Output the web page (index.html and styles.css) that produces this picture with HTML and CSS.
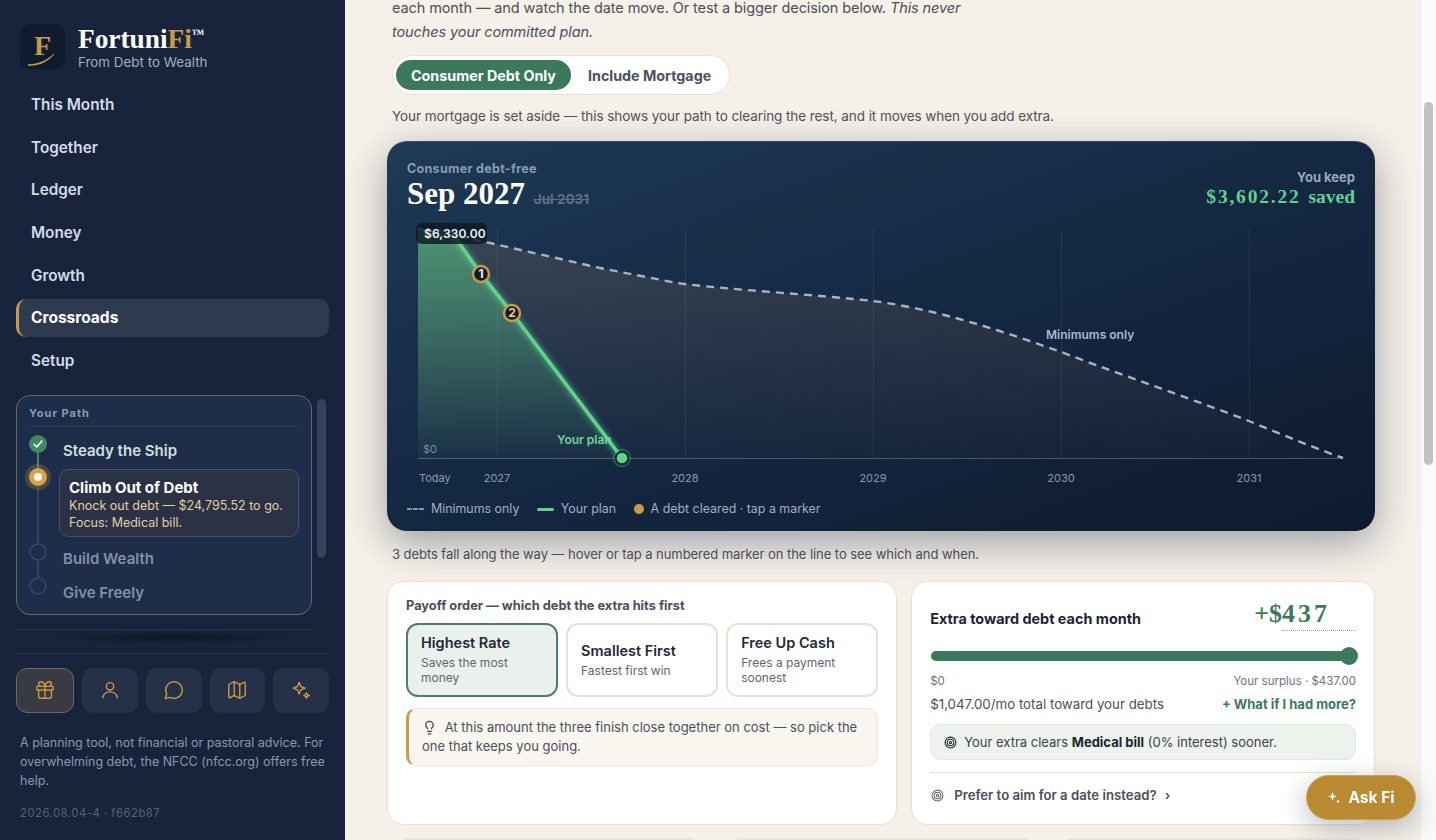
FILE: index.html
```html
<!DOCTYPE html>
<html lang="en">
<head>
  <meta charset="UTF-8" />
  <title>FortuniFi - Crossroads</title>
  <link rel="stylesheet" href="styles.css">
</head>
<body>
  <div class="app">
    <aside class="sidebar">
      <div class="brand">
        <div class="brand-logo">
          <span class="brand-f">F</span>
          <svg class="brand-swoosh" viewBox="0 0 45 45" width="45" height="45"><path d="M8 41 C18 40.500 27 37 34 30 C28 37.500 18 42 8 41Z" fill="#c99b45" stroke="#c99b45" stroke-width="1"/></svg>
        </div>
        <div class="brand-text">
          <div class="brand-name">Fortuni<span class="gold">Fi</span><sup>™</sup></div>
          <div class="brand-sub">From Debt to Wealth</div>
        </div>
      </div>

      <nav class="nav">
        <a class="nav-item">This Month</a>
        <a class="nav-item">Together</a>
        <a class="nav-item">Ledger</a>
        <a class="nav-item">Money</a>
        <a class="nav-item">Growth</a>
        <a class="nav-item active">Crossroads</a>
        <a class="nav-item">Setup</a>
      </nav>

      <div class="path-wrap">
        <div class="path-panel">
          <div class="path-title">Your Path</div>
          <div class="step done">
            <span class="step-node">
              <svg viewBox="0 0 18 18" width="18" height="18"><path d="M5.200 9.400l2.600 2.600 5-6" fill="none" stroke="#fff" stroke-width="1.600" stroke-linecap="round" stroke-linejoin="round"/></svg>
            </span>
            <span class="step-label">Steady the Ship</span>
          </div>
          <div class="step current">
            <span class="step-node"></span>
            <div class="step-card">
              <div class="step-card-title">Climb Out of Debt</div>
              <div class="step-card-desc">Knock out debt — $24,795.52 to go.<br>Focus: Medical bill.</div>
            </div>
          </div>
          <div class="step">
            <span class="step-node"></span>
            <span class="step-label">Build Wealth</span>
          </div>
          <div class="step last">
            <span class="step-node"></span>
            <span class="step-label">Give Freely</span>
          </div>
        </div>
        <div class="path-scroll"></div>
      </div>

      <div class="side-sep"></div>
      <div class="side-fade"></div>

      <div class="tools">
        <button class="tool active">
          <svg viewBox="0 0 24 24"><rect x="3" y="8" width="18" height="4" rx="1"/><path d="M12 8v13"/><path d="M19 12v7a2 2 0 0 1-2 2H7a2 2 0 0 1-2-2v-7"/><path d="M7.500 8a2.500 2.500 0 0 1 0-5A4.800 8 0 0 1 12 8a4.800 8 0 0 1 4.500-5 2.500 2.500 0 0 1 0 5"/></svg>
        </button>
        <button class="tool">
          <svg viewBox="0 0 24 24"><circle cx="12" cy="8" r="4"/><path d="M4 20.500c.8-4 4-6.500 8-6.500s7.200 2.500 8 6.500"/></svg>
        </button>
        <button class="tool">
          <svg viewBox="0 0 24 24"><path d="M7.900 20A9 9 0 1 0 4 16.100L2.500 21.500Z"/></svg>
        </button>
        <button class="tool">
          <svg viewBox="0 0 24 24"><path d="M14.106 5.553a2 2 0 0 0 1.788 0l3.659-1.830A1 1 0 0 1 21 4.619v12.764a1 1 0 0 1-.553.894l-4.553 2.277a2 2 0 0 1-1.788 0l-4.212-2.106a2 2 0 0 0-1.788 0l-3.659 1.830A1 1 0 0 1 3 19.381V6.618a1 1 0 0 1 .553-.894l4.553-2.277a2 2 0 0 1 1.788 0z"/><path d="M15 5.764v15"/><path d="M9 3.236v15"/></svg>
        </button>
        <button class="tool">
          <svg viewBox="0 0 24 24"><path d="M10 3.500l1.800 4.700 4.700 1.800-4.700 1.800-1.800 4.700-1.800-4.700L3.500 10l4.700-1.800z"/><path d="M18 15l.9 2.100 2.100.9-2.100.9-.9 2.100-.9-2.100-2.100-.9 2.100-.9z"/></svg>
        </button>
      </div>

      <p class="disclaimer">A planning tool, not financial or pastoral advice. For overwhelming debt, the NFCC (nfcc.org) offers free help.</p>
      <div class="version">2026.08.04-4 · f662b87</div>
    </aside>

    <main class="main">
      <p class="intro">each month — and watch the date move. Or test a bigger decision below. <em>This never<br>touches your committed plan.</em></p>

      <div class="toggle">
        <button class="toggle-btn on">Consumer Debt Only</button>
        <button class="toggle-btn">Include Mortgage</button>
      </div>

      <p class="note">Your mortgage is set aside — this shows your path to clearing the rest, and it moves when you add extra.</p>

      <section class="chart-card">
        <div class="chart-head">
          <div>
            <div class="chart-eyebrow">Consumer debt-free</div>
            <div class="chart-date">Sep 2027 <s class="chart-old">Jul 2031</s></div>
          </div>
          <div class="chart-keep">
            <div class="keep-label">You keep</div>
            <div class="keep-value"><span class="keep-sum">$3,602.22</span> saved</div>
          </div>
        </div>

        <svg class="chart" viewBox="407 222 948 270" width="948" height="270">
          <defs>
            <linearGradient id="planFill" x1="0" y1="0" x2="0" y2="1">
              <stop offset="0" stop-color="#5fd38d" stop-opacity=".55"/>
              <stop offset="1" stop-color="#5fd38d" stop-opacity=".03"/>
            </linearGradient>
            <linearGradient id="minFill" x1="0" y1="0" x2="0" y2="1">
              <stop offset="0" stop-color="#b08a60" stop-opacity=".2"/>
              <stop offset="1" stop-color="#b08a60" stop-opacity=".02"/>
            </linearGradient>
            <filter id="planGlow" x="-20%" y="-20%" width="140%" height="140%"><feGaussianBlur stdDeviation="2.500"/></filter>
          </defs>

          <g stroke="#ffffff" stroke-opacity=".07" stroke-width="1">
            <path d="M497.500 229V458"/>
            <path d="M685.500 229V458"/>
            <path d="M873.500 229V458"/>
            <path d="M1061.500 229V458"/>
            <path d="M1249.500 229V458"/>
          </g>

          <path d="M418 229 L490 243 L600 268 L677 283 C720 289 820 295 873 301 C935 309 1000 330 1061 352 C1130 378 1200 402 1249 421 C1285 436 1320 450 1343 458 L418 458Z" fill="url(#minFill)"/>
          <path d="M418 229 L452 229 L481 274 L512 313 L622 458 L418 458Z" fill="url(#planFill)"/>
          <path d="M418 458.500H1343" stroke="#ffffff" stroke-opacity=".25" stroke-width="1"/>

          <path d="M418 229 L490 243 L600 268 L677 283 C720 289 820 295 873 301 C935 309 1000 330 1061 352 C1130 378 1200 402 1249 421 C1285 436 1320 450 1343 458" fill="none" stroke="#a9b3c4" stroke-width="2.400" stroke-dasharray="8 6"/>
          <path d="M452 233 L481 274 L512 313 L622 458" fill="none" stroke="#5fd38d" stroke-opacity=".45" stroke-width="7" filter="url(#planGlow)"/>
          <path d="M452 233 L481 274 L512 313 L622 458" fill="none" stroke="#5fd38d" stroke-width="3.600" stroke-linecap="round"/>

          <rect x="416" y="223" width="71" height="21" rx="6" fill="#0d1a24" fill-opacity=".82"/>
          <text class="c-peak" x="424" y="238">$6,330.00</text>

          <circle cx="481" cy="274" r="8" fill="#141a2a" stroke="#c99b45" stroke-width="2.500"/>
          <text class="c-num" x="481" y="278" fill="#f3f4f6">1</text>
          <circle cx="512" cy="313" r="8" fill="#141a2a" stroke="#c99b45" stroke-width="2.500"/>
          <text class="c-num" x="512" y="317" fill="#f0d08a">2</text>

          <circle cx="622" cy="458" r="9.500" fill="#5fd38d" fill-opacity=".25"/>
          <circle cx="622" cy="458" r="6.300" fill="#5fd38d" stroke="#0f2a25" stroke-width="2"/>

          <text class="c-plan" x="557" y="444">Your plan</text>
          <text class="c-min" x="1046" y="339">Minimums only</text>
          <text class="c-zero" x="423" y="453">$0</text>

          <text class="c-axis" x="419" y="482">Today</text>
          <text class="c-axis mid" x="497" y="482">2027</text>
          <text class="c-axis mid" x="685" y="482">2028</text>
          <text class="c-axis mid" x="873" y="482">2029</text>
          <text class="c-axis mid" x="1061" y="482">2030</text>
          <text class="c-axis mid" x="1249" y="482">2031</text>
        </svg>

        <div class="legend">
          <span class="legend-item"><i class="key key-dash"></i>Minimums only</span>
          <span class="legend-item"><i class="key key-line"></i>Your plan</span>
          <span class="legend-item"><i class="key key-dot"></i>A debt cleared · tap a marker</span>
        </div>
      </section>

      <p class="note under">3 debts fall along the way — hover or tap a numbered marker on the line to see which and when.</p>

      <div class="cards">
        <section class="card">
          <div class="card-label">Payoff order — which debt the extra hits first</div>
          <div class="options">
            <div class="option on">
              <div class="option-title">Highest Rate</div>
              <div class="option-sub">Saves the most money</div>
            </div>
            <div class="option">
              <div class="option-title">Smallest First</div>
              <div class="option-sub">Fastest first win</div>
            </div>
            <div class="option">
              <div class="option-title">Free Up Cash</div>
              <div class="option-sub">Frees a payment soonest</div>
            </div>
          </div>
          <div class="tip">
            <svg class="inline-icon" viewBox="0 0 24 24"><path d="M15 14c.2-1 .7-1.700 1.500-2.500 1-.9 1.500-2.200 1.500-3.500A6 6 0 0 0 6 8c0 1 .2 2.200 1.500 3.500.7.7 1.300 1.500 1.500 2.500"/><path d="M9 18h6"/><path d="M10 22h4"/></svg>
            At this amount the three finish close together on cost — so pick the one that keeps you going.
          </div>
        </section>

        <section class="card">
          <div class="extra-head">
            <div class="extra-title">Extra toward debt each month</div>
            <div class="extra-amount"><span class="extra-prefix">+$</span><span class="extra-value">437</span></div>
          </div>
          <div class="slider"><span class="slider-thumb"></span></div>
          <div class="slider-labels"><span>$0</span><span>Your surplus · $437.00</span></div>
          <div class="extra-row">
            <span>$1,047.00/mo total toward your debts</span>
            <a class="extra-link">+ What if I had more?</a>
          </div>
          <div class="clears">
            <svg class="target-icon" viewBox="0 0 24 24"><circle cx="12" cy="12" r="10"/><circle cx="12" cy="12" r="6"/><circle cx="12" cy="12" r="2"/></svg>
            <span>Your extra clears <b>Medical bill</b> (0% interest) sooner.</span>
          </div>
          <div class="aim">
            <svg class="target-icon muted" viewBox="0 0 24 24"><circle cx="12" cy="12" r="10"/><circle cx="12" cy="12" r="6"/><circle cx="12" cy="12" r="2"/></svg>
            <span>Prefer to aim for a date instead?</span><span class="aim-arrow">›</span>
          </div>
        </section>
      </div>

      <div class="next-row">
        <div class="next-card"></div>
        <div class="next-card"></div>
        <div class="next-card"></div>
      </div>
    </main>

    <div class="scroll-track"><div class="scroll-thumb"></div></div>
  </div>

  <button class="ask-fi">
    <svg viewBox="0 0 14 14" width="14" height="14"><path d="M5.500 1l1.100 3.400L10 5.500 6.600 6.600 5.500 10 4.400 6.600 1 5.500l3.400-1.100z" fill="#fff"/><circle cx="11" cy="10.500" r="1.200" fill="#fff"/></svg>
    Ask Fi
  </button>
</body>
</html>
```

FILE: styles.css
```css
* {
  box-sizing: border-box;
}

html, body {
  height: 100%;
}

body {
  margin: 0;
  overflow: hidden;
  font-family: Inter, 'Liberation Sans', sans-serif;
  background: #f5f1e9;
  color: #4a4f5a;
}

button {
  font-family: inherit;
  border: 0;
  background: none;
  padding: 0;
}

p {
  margin: 0;
}

.app {
  display: flex;
  height: 840px;
}

/* === SIDEBAR === */
.sidebar {
  flex: 0 0 345px;
  height: 840px;
  overflow: hidden;
  padding: 24px 16px 0;
  background: #18243b;
  display: flex;
  flex-direction: column;
}

.brand {
  display: flex;
  align-items: center;
  gap: 13px;
  padding-left: 4px;
  height: 45px;
}

.brand-logo {
  position: relative;
  width: 45px;
  height: 45px;
  border-radius: 10px;
  background: #111b2f;
  text-align: center;
}

.brand-f {
  font-family: 'Liberation Serif', serif;
  font-weight: 700;
  font-size: 28px;
  line-height: 44px;
  color: #c99b45;
}

.brand-swoosh {
  position: absolute;
  left: 0;
  top: 0;
}

.brand-name {
  font-family: 'Liberation Serif', serif;
  font-weight: 700;
  font-size: 27.3px;
  line-height: 30px;
  color: #fff;
}

.brand-name sup {
  font-size: 13px;
  line-height: 0;
  vertical-align: 10px;
}

.gold {
  color: #c99b45;
}

.brand-sub {
  font-size: 13.4px;
  line-height: 16px;
  color: #a4aec2;
}

.nav {
  display: flex;
  flex-direction: column;
  gap: 4.67px;
  margin-top: 17px;
}

.nav-item {
  height: 38px;
  padding-left: 15px;
  font-size: 15.3px;
  font-weight: 600;
  line-height: 38px;
  color: #d5dbe6;
  border-radius: 10px;
}

.nav-item.active {
  background: #2e3a4f;
  border-left: 3px solid #c99b45;
  padding-left: 12px;
  color: #fff;
  font-size: 15.5px;
  font-weight: 700;
}

.path-wrap {
  display: flex;
  gap: 5px;
  margin-top: 15px;
}

.path-panel {
  flex: 0 0 296px;
  height: 220px;
  padding: 10px 12px 11px;
  background: #1d2d4a;
  border: 1px solid #6a6a5c;
  border-radius: 14px;
}

.path-scroll {
  width: 9px;
  height: 159px;
  margin-top: 4px;
  background: #34435c;
  border-radius: 5px;
}

.path-title {
  font-size: 11px;
  font-weight: 700;
  line-height: 14px;
  letter-spacing: 1px;
  color: #8e9ab2;
  padding-bottom: 6px;
  border-bottom: 1px solid #2a3a57;
  margin-bottom: 8px;
}

.step {
  position: relative;
  display: flex;
  align-items: flex-start;
  gap: 16px;
  padding-bottom: 8px;
}

.step.done {
  padding-bottom: 7px;
}

.step.current {
  gap: 12px;
  padding-bottom: 6px;
}

.step.last {
  padding-bottom: 0;
}

.step-node {
  position: relative;
  z-index: 1;
  flex: 0 0 18px;
  width: 18px;
  height: 18px;
  border-radius: 50%;
  border: 2px solid #34445f;
  background: #1d2d4a;
}

.step::after {
  content: '';
  position: absolute;
  left: 8px;
  top: 18px;
  bottom: 0;
  width: 2px;
  background: #34445f;
}

.step.last::after {
  display: none;
}

.step.done::after {
  background: #3f8a63;
}

.step.done .step-node {
  background: #3f8a63;
  border: 0;
}

.step.current .step-node {
  margin-top: 0;
  background: #d9a441;
  border: 0;
  box-shadow: 0 0 0 4px rgba(201, 155, 69, 0.25);
}

.step.current .step-node::after {
  content: '';
  position: absolute;
  left: 5px;
  top: 5px;
  width: 8px;
  height: 8px;
  border-radius: 50%;
  background: #fff;
}

.step-label {
  padding-top: 6px;
  font-size: 15px;
  font-weight: 600;
  line-height: 20px;
  color: #8490a8;
}

.step.done .step-label {
  color: #cfe0da;
}

.step-card {
  flex: 1;
  height: 68px;
  margin-top: 1px;
  padding: 9px 9px 0;
  background: #2b3245;
  border: 1px solid #4e5260;
  border-radius: 10px;
}

.step-card-title {
  font-size: 15px;
  font-weight: 700;
  line-height: 18px;
  color: #fff;
}

.step-card-desc {
  font-size: 12.5px;
  line-height: 17px;
  color: #e0cfa0;
}

.side-sep {
  width: 296px;
  height: 1px;
  margin-top: 14px;
  background: #243350;
}

.side-fade {
  height: 23px;
  background: radial-gradient(ellipse 125px 7px at 50% 7px, #0f1726, rgba(15, 23, 38, 0));
}

.tools {
  display: flex;
  gap: 8px;
  border-top: 1px solid #243350;
  padding-top: 14px;
}

.tool {
  flex: 1;
  height: 45px;
  display: flex;
  align-items: center;
  justify-content: center;
  background: #243149;
  border-radius: 11px;
}

.tool.active {
  flex: 0 0 58px;
  background: #3a3b42;
  border: 1px solid #6b6a5e;
}

.tool svg {
  width: 22px;
  height: 22px;
  fill: none;
  stroke: #c99b45;
  stroke-width: 1.5;
  stroke-linecap: round;
  stroke-linejoin: round;
}

.disclaimer {
  margin-top: 20px;
  padding: 0 4px;
  font-size: 12.5px;
  line-height: 19px;
  color: #8d98ad;
}

.version {
  margin-top: 15px;
  padding-left: 4px;
  font-size: 11.3px;
  line-height: 16px;
  letter-spacing: 0.5px;
  color: #566279;
}

/* === MAIN === */
.main {
  flex: 1;
  height: 840px;
  overflow: hidden;
  padding: 0 45px 0 42px;
}

.scroll-track {
  flex: 0 0 16px;
  background: #fafafa;
  border-left: 1px solid #eeeeee;
  padding: 102px 3px 0;
}

.scroll-thumb {
  width: 9px;
  height: 363px;
  background: #c2c2c2;
  border-radius: 5px;
}

.intro {
  margin-top: -4px;
  padding-left: 5px;
  font-size: 14.5px;
  line-height: 24px;
  letter-spacing: -0.1px;
  color: #4a4f5a;
}

.toggle {
  display: inline-flex;
  align-items: center;
  margin: 11px 0 0 5px;
  height: 40px;
  padding: 0 18px 0 3px;
  background: #fff;
  border: 1px solid #e8e2d6;
  border-radius: 20px;
  gap: 17px;
  vertical-align: top;
}

.toggle-btn {
  font-size: 14.3px;
  font-weight: 700;
  color: #4a5160;
}

.toggle-btn.on {
  width: 175px;
  height: 30px;
  border-radius: 15px;
  background: #3a7a5b;
  color: #fff;
}

.note {
  margin-top: 11px;
  padding-left: 5px;
  font-size: 13.5px;
  line-height: 21px;
  letter-spacing: -0.07px;
  color: #4f535c;
}

.note.under {
  margin-top: 13px;
  font-size: 13px;
  line-height: 20px;
  letter-spacing: -0.06px;
}

/* === CHART === */
.chart-card {
  position: relative;
  z-index: 1;
  height: 390px;
  margin-top: 14px;
  padding: 20px 20px 0;
  border-radius: 20px;
  background: linear-gradient(160deg, #1e3a54 0%, #162b47 40%, #0e1a2e 100%);
  box-shadow: 0 12px 40px rgba(24, 36, 59, 0.4), inset 0 1px 0 rgba(255, 255, 255, 0.12);
}

.chart-head {
  display: flex;
  justify-content: space-between;
  height: 50px;
}

.chart-eyebrow {
  font-size: 12.5px;
  font-weight: 700;
  line-height: 16px;
  letter-spacing: 0.3px;
  color: #8b9bb4;
}

.chart-date {
  font-family: 'Liberation Serif', serif;
  font-size: 31px;
  font-weight: 700;
  line-height: 34px;
  color: #fff;
}

.chart-old {
  margin-left: 1px;
  font-family: Inter, sans-serif;
  font-size: 13.5px;
  font-weight: 700;
  color: #5f6f86;
}

.chart-keep {
  margin-top: 8px;
  text-align: right;
}

.keep-label {
  font-size: 13px;
  font-weight: 700;
  line-height: 16px;
  color: #9aa7bd;
}

.keep-value {
  font-family: 'Liberation Serif', serif;
  font-size: 19.5px;
  font-weight: 700;
  line-height: 24px;
  color: #5fd38d;
}

.keep-sum {
  margin-right: 3px;
  letter-spacing: 1.8px;
}

.chart {
  display: block;
  margin-top: 11px;
}

.chart text {
  font-family: Inter, sans-serif;
}

.c-peak {
  font-size: 12px;
  font-weight: 600;
  letter-spacing: 0.1px;
  fill: #eef1f5;
}

.c-num {
  font-size: 12px;
  font-weight: 700;
  text-anchor: middle;
}

.c-plan {
  font-size: 12px;
  font-weight: 600;
  fill: #6fd899;
}

.c-min {
  font-size: 12px;
  font-weight: 600;
  fill: #aeb8ca;
}

.c-zero {
  font-size: 11px;
  fill: #7f8ca3;
}

.c-axis {
  font-size: 11px;
  fill: #8d98ad;
}

.c-axis.mid {
  text-anchor: middle;
}

.legend {
  display: flex;
  align-items: center;
  gap: 17.5px;
  margin-top: 8px;
  font-size: 12.4px;
  line-height: 18px;
  color: #a4aec2;
}

.legend-item {
  display: flex;
  align-items: center;
  gap: 7px;
}

.key {
  display: block;
}

.key-dash {
  width: 17px;
  height: 2px;
  background: repeating-linear-gradient(to right, #8d98ad 0, #8d98ad 5px, transparent 5px, transparent 6px);
}

.key-line {
  width: 17px;
  height: 3px;
  border-radius: 2px;
  background: #5fd38d;
}

.key-dot {
  width: 10px;
  height: 10px;
  border-radius: 50%;
  background: #c99b45;
}

/* === CARDS === */
.cards {
  display: grid;
  grid-template-columns: 1.1fr 1fr;
  gap: 14px;
  margin-top: 17px;
}

.card {
  height: 244px;
  padding: 16px 18px 0;
  background: #fff;
  border: 1px solid #e8e2d6;
  border-radius: 16px;
}

.card-label {
  font-size: 12.8px;
  font-weight: 700;
  line-height: 16px;
  color: #4a4f5a;
}

.options {
  display: grid;
  grid-template-columns: repeat(3, 1fr);
  gap: 8px;
  margin-top: 9px;
}

.option {
  height: 74px;
  padding: 0 13px 2px;
  display: flex;
  flex-direction: column;
  justify-content: center;
  background: #fff;
  border: 2px solid #e8e2d6;
  border-radius: 12px;
}

.option.on {
  background: #eaf1ec;
  border-color: #4f7d68;
}

.option-title {
  font-size: 14.5px;
  font-weight: 600;
  line-height: 20px;
  color: #1f2937;
}

.option-sub {
  font-size: 12px;
  line-height: 15px;
  margin-top: 2px;
  color: #5f6570;
}

.tip {
  height: 58px;
  margin-top: 11px;
  padding: 9px 12px 0 13px;
  background: #f9f6f0;
  border: 1px solid #ece7dc;
  border-left: 3px solid #c99b45;
  border-radius: 10px;
  font-size: 13px;
  line-height: 19px;
  color: #4a4f5a;
}

.inline-icon {
  width: 15px;
  height: 15px;
  margin: 0 4px 2px 0;
  vertical-align: middle;
  fill: none;
  stroke: #3c4250;
  stroke-width: 2;
  stroke-linecap: round;
  stroke-linejoin: round;
}

.extra-head {
  display: flex;
  align-items: center;
  justify-content: space-between;
  height: 36px;
  margin-top: 2px;
}

.extra-title {
  font-size: 14.4px;
  font-weight: 700;
  color: #1c2433;
}

.extra-amount {
  align-self: flex-start;
  font-family: 'Liberation Serif', serif;
  font-size: 26px;
  font-weight: 700;
  line-height: 28px;
  color: #3a7a5b;
  display: flex;
}

.extra-value {
  width: 74px;
  padding-bottom: 2px;
  letter-spacing: 3px;
  border-bottom: 1px dotted #9aa3a0;
}

.slider {
  position: relative;
  height: 10px;
  margin: 15px 0 0 1px;
  border-radius: 5px;
  background: #3a7a5b;
}

.slider-thumb {
  position: absolute;
  right: -2px;
  top: -4px;
  width: 18px;
  height: 18px;
  border-radius: 50%;
  background: #3a7a5b;
}

.slider-labels {
  display: flex;
  justify-content: space-between;
  margin-top: 13px;
  font-size: 11.5px;
  line-height: 14px;
  color: #6b7280;
}

.extra-row {
  display: flex;
  justify-content: space-between;
  margin-top: 6px;
  font-size: 13.3px;
  line-height: 20px;
  color: #4a4f5a;
}

.extra-link {
  font-size: 13px;
  font-weight: 700;
  color: #3a7a5b;
}

.clears {
  display: flex;
  align-items: center;
  gap: 7px;
  height: 36px;
  margin-top: 10px;
  padding-left: 13px;
  background: #edf2ed;
  border: 1px solid #e2e8e2;
  border-radius: 10px;
  font-size: 13px;
  color: #3c4250;
}

.clears b {
  color: #1c2433;
}

.target-icon {
  flex: 0 0 13px;
  width: 13px;
  height: 13px;
  fill: none;
  stroke: #1c2433;
  stroke-width: 2;
}

.target-icon.muted {
  stroke: #5f6570;
}

.aim {
  display: flex;
  align-items: center;
  gap: 10px;
  margin-top: 12px;
  padding: 12px 0 0 1px;
  border-top: 1px solid #e8e2d6;
  font-size: 13.2px;
  font-weight: 600;
  line-height: 20px;
  color: #4a4f5a;
}

.aim-arrow {
  margin-left: -2px;
}

.next-row {
  display: grid;
  grid-template-columns: repeat(3, 1fr);
  gap: 30px;
  margin-top: 13px;
  padding: 0 10px;
}

.next-card {
  height: 30px;
  border-radius: 10px;
  background: #e8e4dc;
}

/* === ASK FI === */
.ask-fi {
  position: fixed;
  left: 1306px;
  top: 775px;
  width: 110px;
  height: 45px;
  display: flex;
  align-items: center;
  justify-content: center;
  gap: 7px;
  border: 1px solid #cfa355;
  border-radius: 23px;
  background: #b98a32;
  color: #fff;
  font-size: 15.5px;
  font-weight: 700;
  box-shadow: 0 8px 28px rgba(24, 36, 59, 0.3);
}
```
